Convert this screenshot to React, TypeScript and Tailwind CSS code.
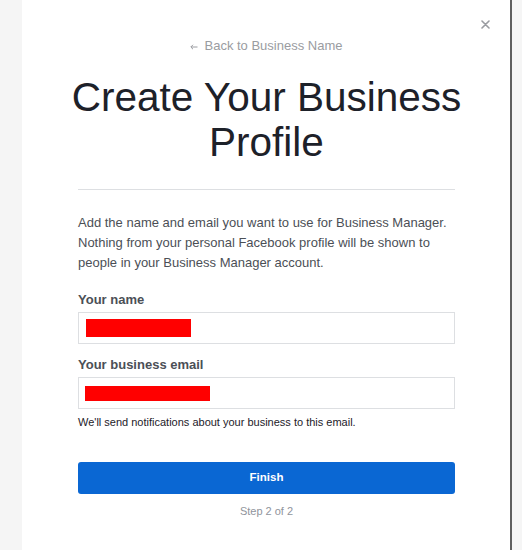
export default function App()
{
    return (
        <div className="h-[550px] overflow-hidden bg-[#f5f5f5] flex pl-[22px] font-['Liberation_Sans',Arial,sans-serif]">
            <div className="relative w-[490px] shrink-0 bg-white border-r-2 border-[#5f5f5f] pl-[56px] pr-[55px] flex flex-col">
                {/* close button */}
                <button className="absolute top-[20px] right-[20px] w-[9px] h-[9px] text-[#9a9ca1]">
                    <svg viewBox="0 0 9 9" className="w-[9px] h-[9px]" fill="none" stroke="currentColor" strokeWidth="1.6" strokeLinecap="round">
                        <path d="M1 1l7 7M8 1L1 8" />
                    </svg>
                </button>

                <a href="#" className="mt-[38px] flex items-center justify-center text-[13px] leading-4 text-[#9a9ca1]">
                    <svg viewBox="0 0 8 6" className="w-[8px] h-[6px] mr-[6px] mt-[2px]" fill="none" stroke="currentColor" strokeWidth="1">
                        <path d="M7.5 3H1M3 0.8L0.8 3L3 5.2" />
                    </svg>
                    Back to Business Name
                </a>

                <h1 className="mt-[21px] -mx-[16px] text-center text-[40.5px] leading-[45px] text-[#1d2129]">
                    Create Your Business Profile
                </h1>

                <div className="mt-[24px] h-px bg-[#dddfe2]" />

                <p className="mt-[23px] text-[13px] leading-5 text-[#4b4f56]">
                    Add the name and email you want to use for Business Manager. Nothing from your personal Facebook profile will be shown to people in your Business Manager account.
                </p>

                <label className="mt-[19px] mb-[4px] text-[13px] leading-4 font-bold text-[#4b4f56]">Your name</label>
                <div className="h-[32px] border border-[#dddfe2] pl-[7px] flex items-center">
                    <div className="w-[105px] h-[18px] bg-[#ff0000]" />
                </div>

                <label className="mt-[13px] mb-[4px] text-[13px] leading-4 font-bold text-[#4b4f56]">Your business email</label>
                <div className="h-[32px] border border-[#dddfe2] pl-[6px] flex items-center">
                    <div className="w-[125px] h-[15px] bg-[#ff0000]" />
                </div>

                <p className="mt-[6px] text-[11px] leading-[14px] text-[#1d2129]">
                    We'll send notifications about your business to this email.
                </p>

                <button className="mt-[33px] h-[32px] rounded-[3px] bg-[#0a67d3] text-white text-[11.5px] font-bold">
                    Finish
                </button>

                <div className="mt-[10px] text-center text-[11px] leading-[14px] text-[#90949c]">Step 2 of 2</div>
            </div>
        </div>
    );
}
